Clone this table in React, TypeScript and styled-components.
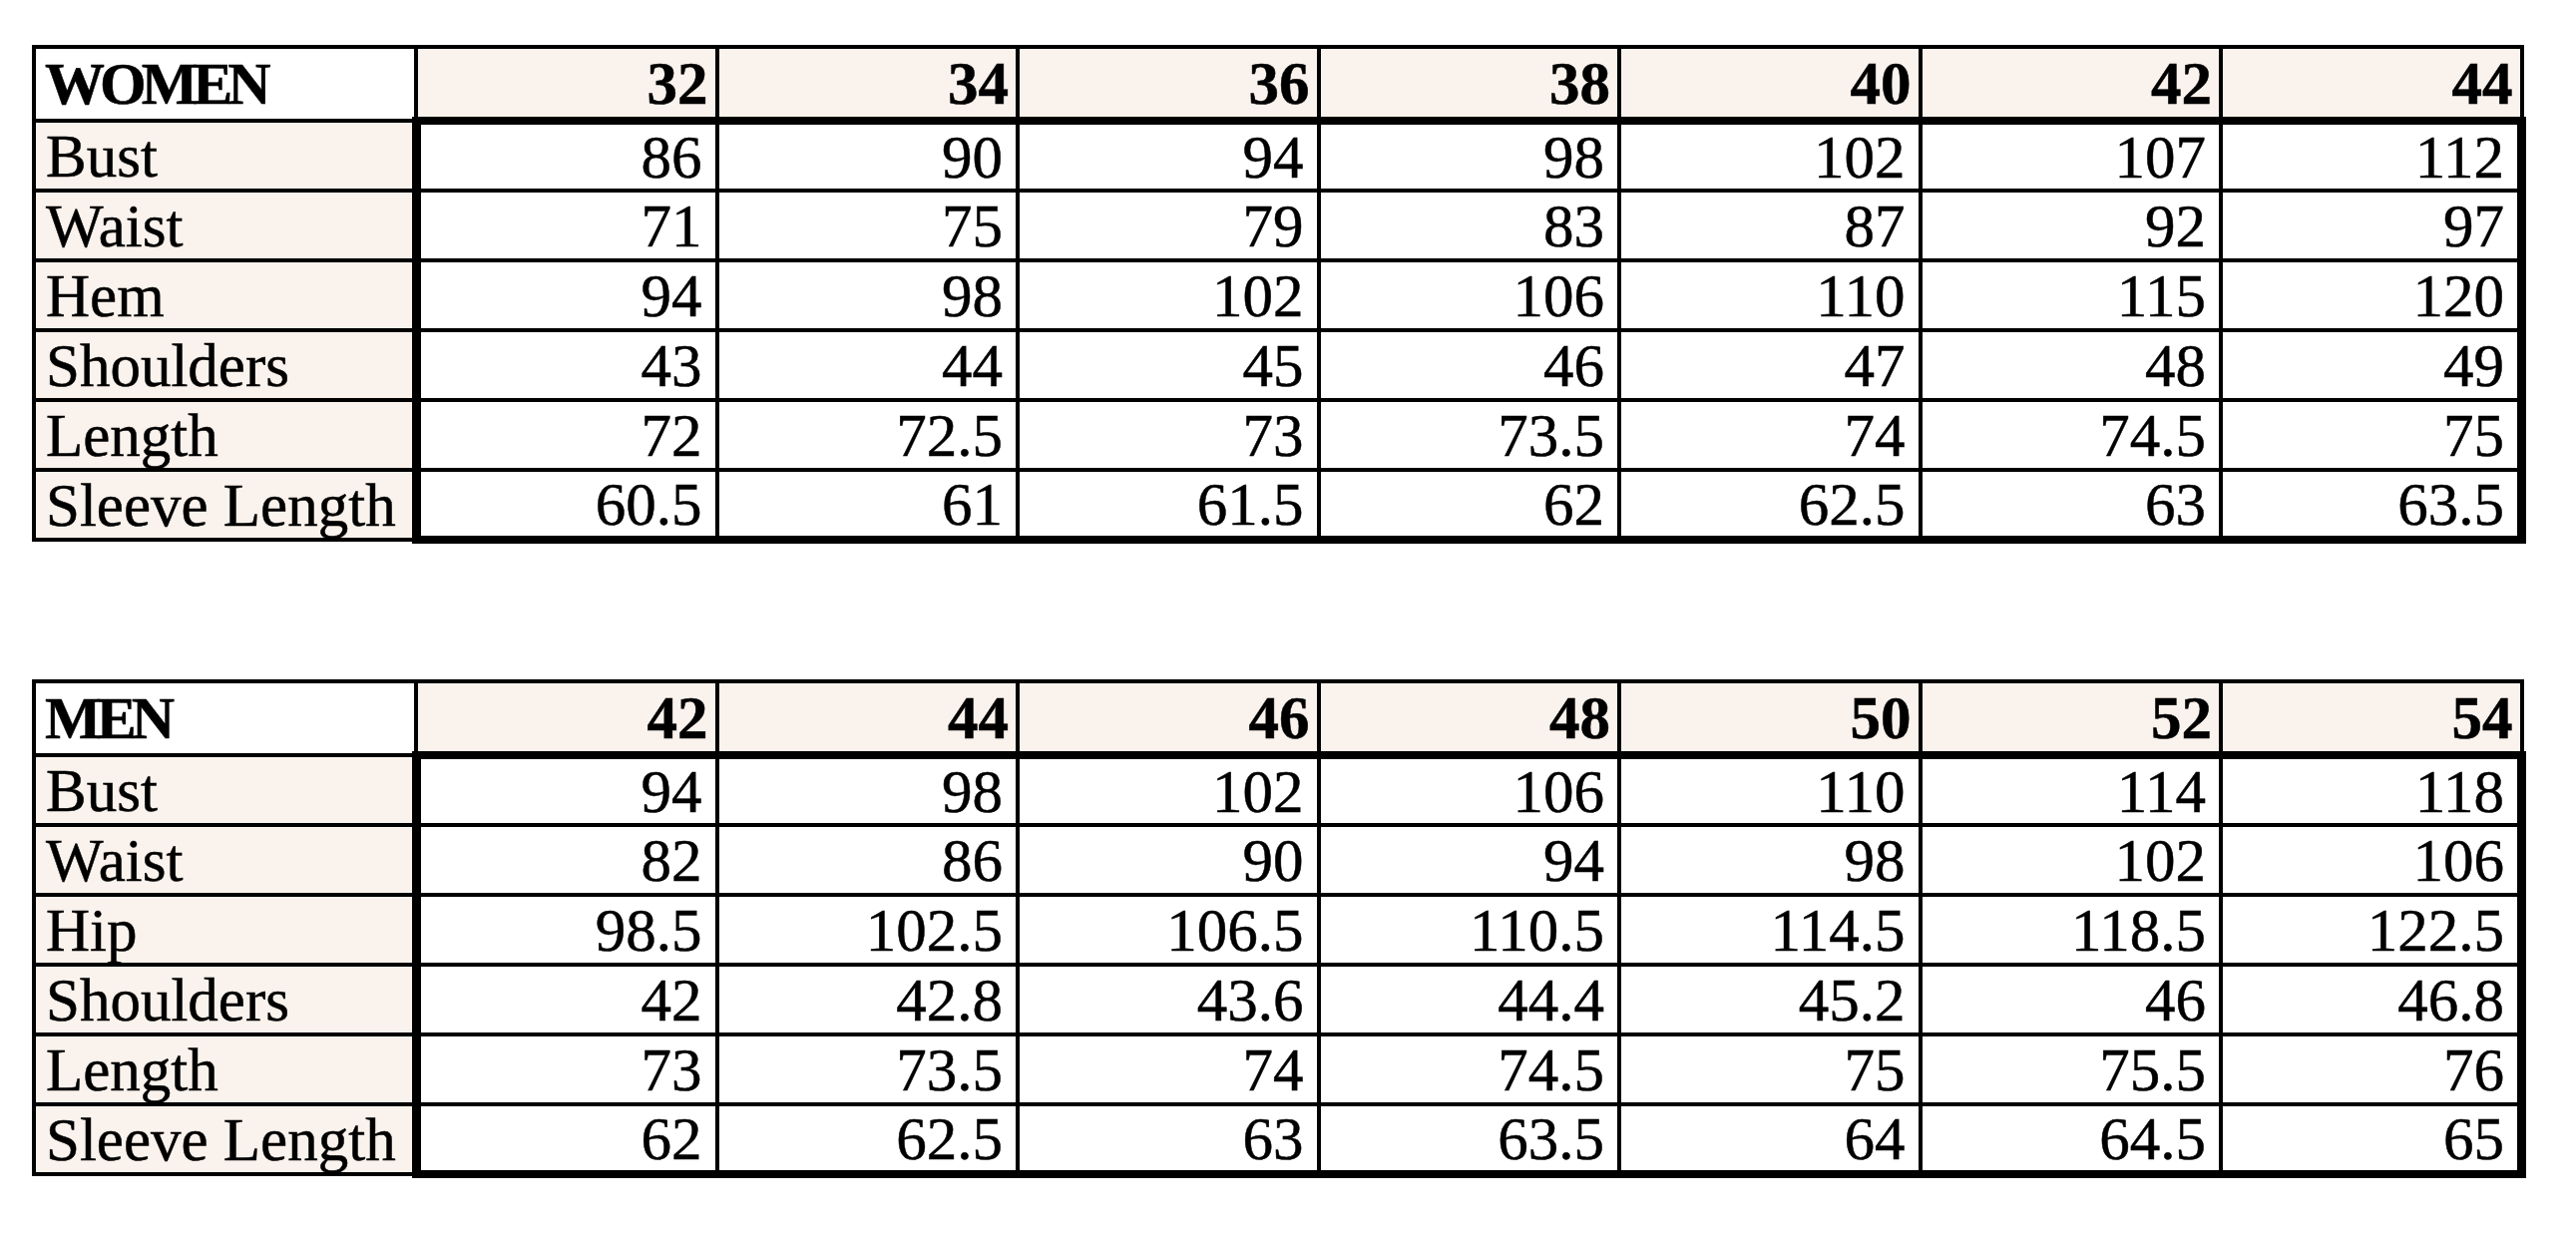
import styled, { createGlobalStyle } from 'styled-components';

const GlobalStyle = createGlobalStyle`
    html, body {
        margin: 0;
        padding: 0;
        background: #ffffff;
    }
`;

interface ISizeTable {
    title: string;
    sizes: string[];
    rows: { label: string; values: string[] }[];
}

const women: ISizeTable = {
    title: "WOMEN",
    sizes: ["32", "34", "36", "38", "40", "42", "44"],
    rows: [
        { label: "Bust", values: ["86", "90", "94", "98", "102", "107", "112"] },
        { label: "Waist", values: ["71", "75", "79", "83", "87", "92", "97"] },
        { label: "Hem", values: ["94", "98", "102", "106", "110", "115", "120"] },
        { label: "Shoulders", values: ["43", "44", "45", "46", "47", "48", "49"] },
        { label: "Length", values: ["72", "72.5", "73", "73.5", "74", "74.5", "75"] },
        { label: "Sleeve Length", values: ["60.5", "61", "61.5", "62", "62.5", "63", "63.5"] },
    ],
};

const men: ISizeTable = {
    title: "MEN",
    sizes: ["42", "44", "46", "48", "50", "52", "54"],
    rows: [
        { label: "Bust", values: ["94", "98", "102", "106", "110", "114", "118"] },
        { label: "Waist", values: ["82", "86", "90", "94", "98", "102", "106"] },
        { label: "Hip", values: ["98.5", "102.5", "106.5", "110.5", "114.5", "118.5", "122.5"] },
        { label: "Shoulders", values: ["42", "42.8", "43.6", "44.4", "45.2", "46", "46.8"] },
        { label: "Length", values: ["73", "73.5", "74", "74.5", "75", "75.5", "76"] },
        { label: "Sleeve Length", values: ["62", "62.5", "63", "63.5", "64", "64.5", "65"] },
    ],
};

function SizeTable({ table }: { table: ISizeTable }) {
    const last = table.sizes.length - 1;
    return (
        <Table>
            <colgroup>
                <LabelCol />
                {table.sizes.map(size => <SizeCol key={size} />)}
            </colgroup>
            <thead>
                <HeadRow>
                    <Corner>{table.title}</Corner>
                    {table.sizes.map(size => (
                        <SizeCell key={size}>{size}</SizeCell>
                    ))}
                </HeadRow>
            </thead>
            <tbody>
                {table.rows.map((row, r) => (
                    <BodyRow key={row.label}>
                        <Label>{row.label}</Label>
                        {row.values.map((value, i) => (
                            <Value
                                key={i}
                                $first={i === 0}
                                $last={i === last}
                                $bottom={r === table.rows.length - 1}
                            >
                                {value}
                            </Value>
                        ))}
                    </BodyRow>
                ))}
            </tbody>
        </Table>
    );
}

function App() {
    return (
        <>
            <GlobalStyle />
            <Page>
                <SizeTable table={women} />
                <SizeTable table={men} />
            </Page>
        </>
    );
}

export default App;

const CREAM = '#faf2ec';

const Page = styled.div`
    display: flex;
    flex-direction: column;
    gap: 136px;
    padding: 45px 0 0 32px;
    font-family: "Liberation Serif", "Times New Roman", serif;
    color: #000;
`;

const Table = styled.table`
    border-collapse: collapse;
    table-layout: fixed;
    width: 2494px;
`;

const LabelCol = styled.col`
    width: 383px;
`;

const SizeCol = styled.col`
    width: 301.5px;
`;

const HeadRow = styled.tr`
    height: 74px;
`;

const BodyRow = styled.tr`
    height: 70px;
`;

const Cell = styled.td`
    border: 4px solid #000;
    padding: 0;
    line-height: 1;
    vertical-align: middle;
    white-space: nowrap;
    overflow: hidden;
    -webkit-text-stroke: 0.5px #000;
`;

const Corner = styled(Cell).attrs({ as: 'th' })`
    background: #fff;
    text-align: left;
    padding-left: 9px;
    font-size: 60px;
    font-weight: 700;
    letter-spacing: -5px;
`;

const SizeCell = styled(Cell).attrs({ as: 'th' })`
    background: ${CREAM};
    text-align: right;
    padding-right: 7px;
    font-size: 61px;
    font-weight: 700;
    border-bottom-width: 8px;
`;

const Label = styled(Cell)`
    background: ${CREAM};
    text-align: left;
    padding-left: 10px;
    font-size: 61px;
`;

const Value = styled(Cell)<{ $first?: boolean; $last?: boolean; $bottom?: boolean }>`
    background: #fff;
    text-align: right;
    padding-right: 13px;
    font-size: 61px;
    ${({ $first }) => $first && 'border-left-width: 9px;'}
    ${({ $last }) => $last && 'border-right-width: 9px;'}
    ${({ $bottom }) => $bottom && 'border-bottom-width: 8px;'}
`;
